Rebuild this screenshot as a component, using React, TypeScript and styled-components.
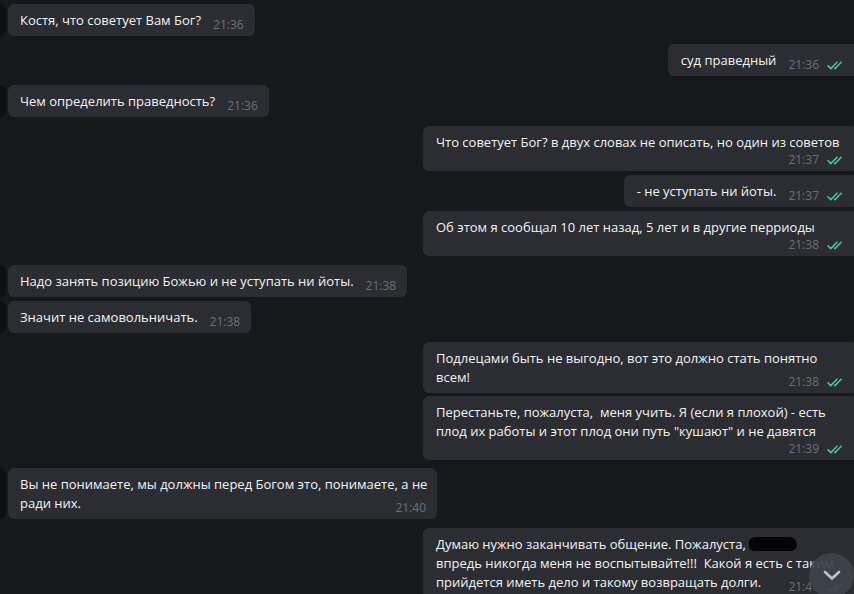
import * as React from 'react'
import styled, { createGlobalStyle } from 'styled-components'

type Message = {
  out?: boolean
  lines: React.ReactNode[]
  time: string
  full?: boolean
  metaBelow?: boolean
  top: number
}

const GlobalStyle = createGlobalStyle`
  html, body {
    margin: 0;
    padding: 0;
    background: #17181c;
    overflow: hidden;
  }
`

const Page = styled.div`
  position: relative;
  width: 854px;
  height: 594px;
  overflow: hidden;
  display: flex;
  flex-direction: column;
  background: #17181c;
  font-family: 'Open Sans', 'Noto Sans', sans-serif;
  font-size: 13px;
  color: #f2f2f2;
`

const Row = styled.div<{ $out?: boolean; $top: number }>`
  display: flex;
  justify-content: ${p => (p.$out ? 'flex-end' : 'flex-start')};
  align-items: stretch;
  margin-top: ${p => p.$top}px;
  flex-shrink: 0;
`

const Marker = styled.div`
  width: 6px;
  margin-right: 2px;
  background: #0e0f12;
  border-radius: 0 6px 6px 0;
`

const BubbleBox = styled.div<{ $out?: boolean; $full?: boolean }>`
  display: flex;
  flex-direction: column;
  box-sizing: border-box;
  ${p => p.$full && `width: ${p.$out ? 435 : 429}px;`}
  padding: 7px ${p => (p.$out ? 14 : 11)}px 6px ${p => (p.$out ? 13 : 12)}px;
  ${p => p.$out && 'margin-right: -4px;'}
  background: #2b2d32;
  border-radius: 6px;
`

const Line = styled.div`
  line-height: 19px;
  white-space: pre;
`

const LastLine = styled.div`
  display: flex;
  align-items: flex-end;
  justify-content: space-between;
`

const MetaRow = styled.div`
  display: flex;
  justify-content: flex-end;
  height: 13px;
  align-items: flex-end;
`

const MetaWrap = styled.div`
  display: flex;
  align-items: center;
  margin-left: 12px;
  height: 12px;
  margin-bottom: -1px;
`

const Time = styled.span`
  font-size: 12px;
  line-height: 12px;
  color: #6b7077;
  white-space: nowrap;
`

const CheckIcon = styled.svg`
  margin-left: 8px;
  fill: none;
  stroke: #4fbf9f;
  stroke-width: 1.6;
  stroke-linecap: round;
  stroke-linejoin: round;
`

const Redacted = styled.span`
  display: inline-block;
  width: 48px;
  height: 14px;
  margin-left: 0;
  vertical-align: -2px;
  background: #050505;
  border-radius: 7px 9px 8px 6px;
`

const ScrollDown = styled.div`
  position: absolute;
  left: 809px;
  top: 553px;
  width: 45px;
  height: 45px;
  border-radius: 50%;
  background: rgba(62, 66, 74, 0.92);
  display: flex;
  align-items: center;
  justify-content: center;

  svg {
    fill: none;
    stroke: #bcc0c6;
    stroke-width: 2.6;
    stroke-linecap: round;
    stroke-linejoin: round;
  }
`

const MESSAGES: Message[] = [
  { top: 4, lines: ['Костя, что советует Вам Бог?'], time: '21:36' },
  { top: 8, out: true, lines: ['суд праведный'], time: '21:36' },
  { top: 9, lines: ['Чем определить праведность?'], time: '21:36' },
  {
    top: 9,
    out: true,
    full: true,
    metaBelow: true,
    lines: ['Что советует Бог? в двух словах не описать, но один из советов'],
    time: '21:37',
  },
  { top: 4, out: true, lines: ['- не уступать ни йоты.'], time: '21:37' },
  {
    top: 4,
    out: true,
    full: true,
    metaBelow: true,
    lines: ['Об этом я сообщал 10 лет назад, 5 лет и в другие перриоды'],
    time: '21:38',
  },
  { top: 9, lines: ['Надо занять позицию Божью и не уступать ни йоты.'], time: '21:38' },
  { top: 4, lines: ['Значит не самовольничать.'], time: '21:38' },
  {
    top: 9,
    out: true,
    full: true,
    lines: ['Подлецами быть не выгодно, вот это должно стать понятно', 'всем!'],
    time: '21:38',
  },
  {
    top: 3,
    out: true,
    full: true,
    metaBelow: true,
    lines: [
      'Перестаньте, пожалуста,  меня учить. Я (если я плохой) - есть',
      'плод их работы и этот плод они путь "кушают" и не давятся',
    ],
    time: '21:39',
  },
  {
    top: 8,
    full: true,
    lines: ['Вы не понимаете, мы должны перед Богом это, понимаете, а не', 'ради них.'],
    time: '21:40',
  },
  {
    top: 9,
    out: true,
    full: true,
    lines: [
      <>
        Думаю нужно заканчивать общение. Пожалуста, <Redacted />
      </>,
      'впредь никогда меня не воспытывайте!!!  Какой я есть с таким',
      'прийдется иметь дело и такому возвращать долги.',
    ],
    time: '21:41',
  },
]

function Checks() {
  return (
    <CheckIcon width="17" height="9" viewBox="0 0 17 9">
      <path d="M1 4.8 L3.8 7.6 L10 1.2" />
      <path d="M7.6 7.2 L8 7.6 L14.2 1.2" />
    </CheckIcon>
  )
}

function Meta({ out, time }: { out?: boolean; time: string }) {
  return (
    <MetaWrap>
      <Time>{time}</Time>
      {out && <Checks />}
    </MetaWrap>
  )
}

function Bubble({ msg }: { msg: Message }) {
  const last = msg.lines.length - 1
  return (
    <Row $out={msg.out} $top={msg.top}>
      {!msg.out && <Marker />}
      <BubbleBox $out={msg.out} $full={msg.full}>
        {msg.lines.map((line, i) =>
          i === last && !msg.metaBelow ? (
            <LastLine key={i}>
              <Line>{line}</Line>
              <Meta out={msg.out} time={msg.time} />
            </LastLine>
          ) : (
            <Line key={i}>{line}</Line>
          )
        )}
        {msg.metaBelow && (
          <MetaRow>
            <Meta out={msg.out} time={msg.time} />
          </MetaRow>
        )}
      </BubbleBox>
    </Row>
  )
}

export default function App() {
  return (
    <>
      <GlobalStyle />
      <Page>
        {MESSAGES.map((m, i) => (
          <Bubble key={i} msg={m} />
        ))}
        <ScrollDown>
          <svg width="18" height="11" viewBox="0 0 18 11">
            <path d="M2 2 L9 8.5 L16 2" />
          </svg>
        </ScrollDown>
      </Page>
    </>
  )
}
